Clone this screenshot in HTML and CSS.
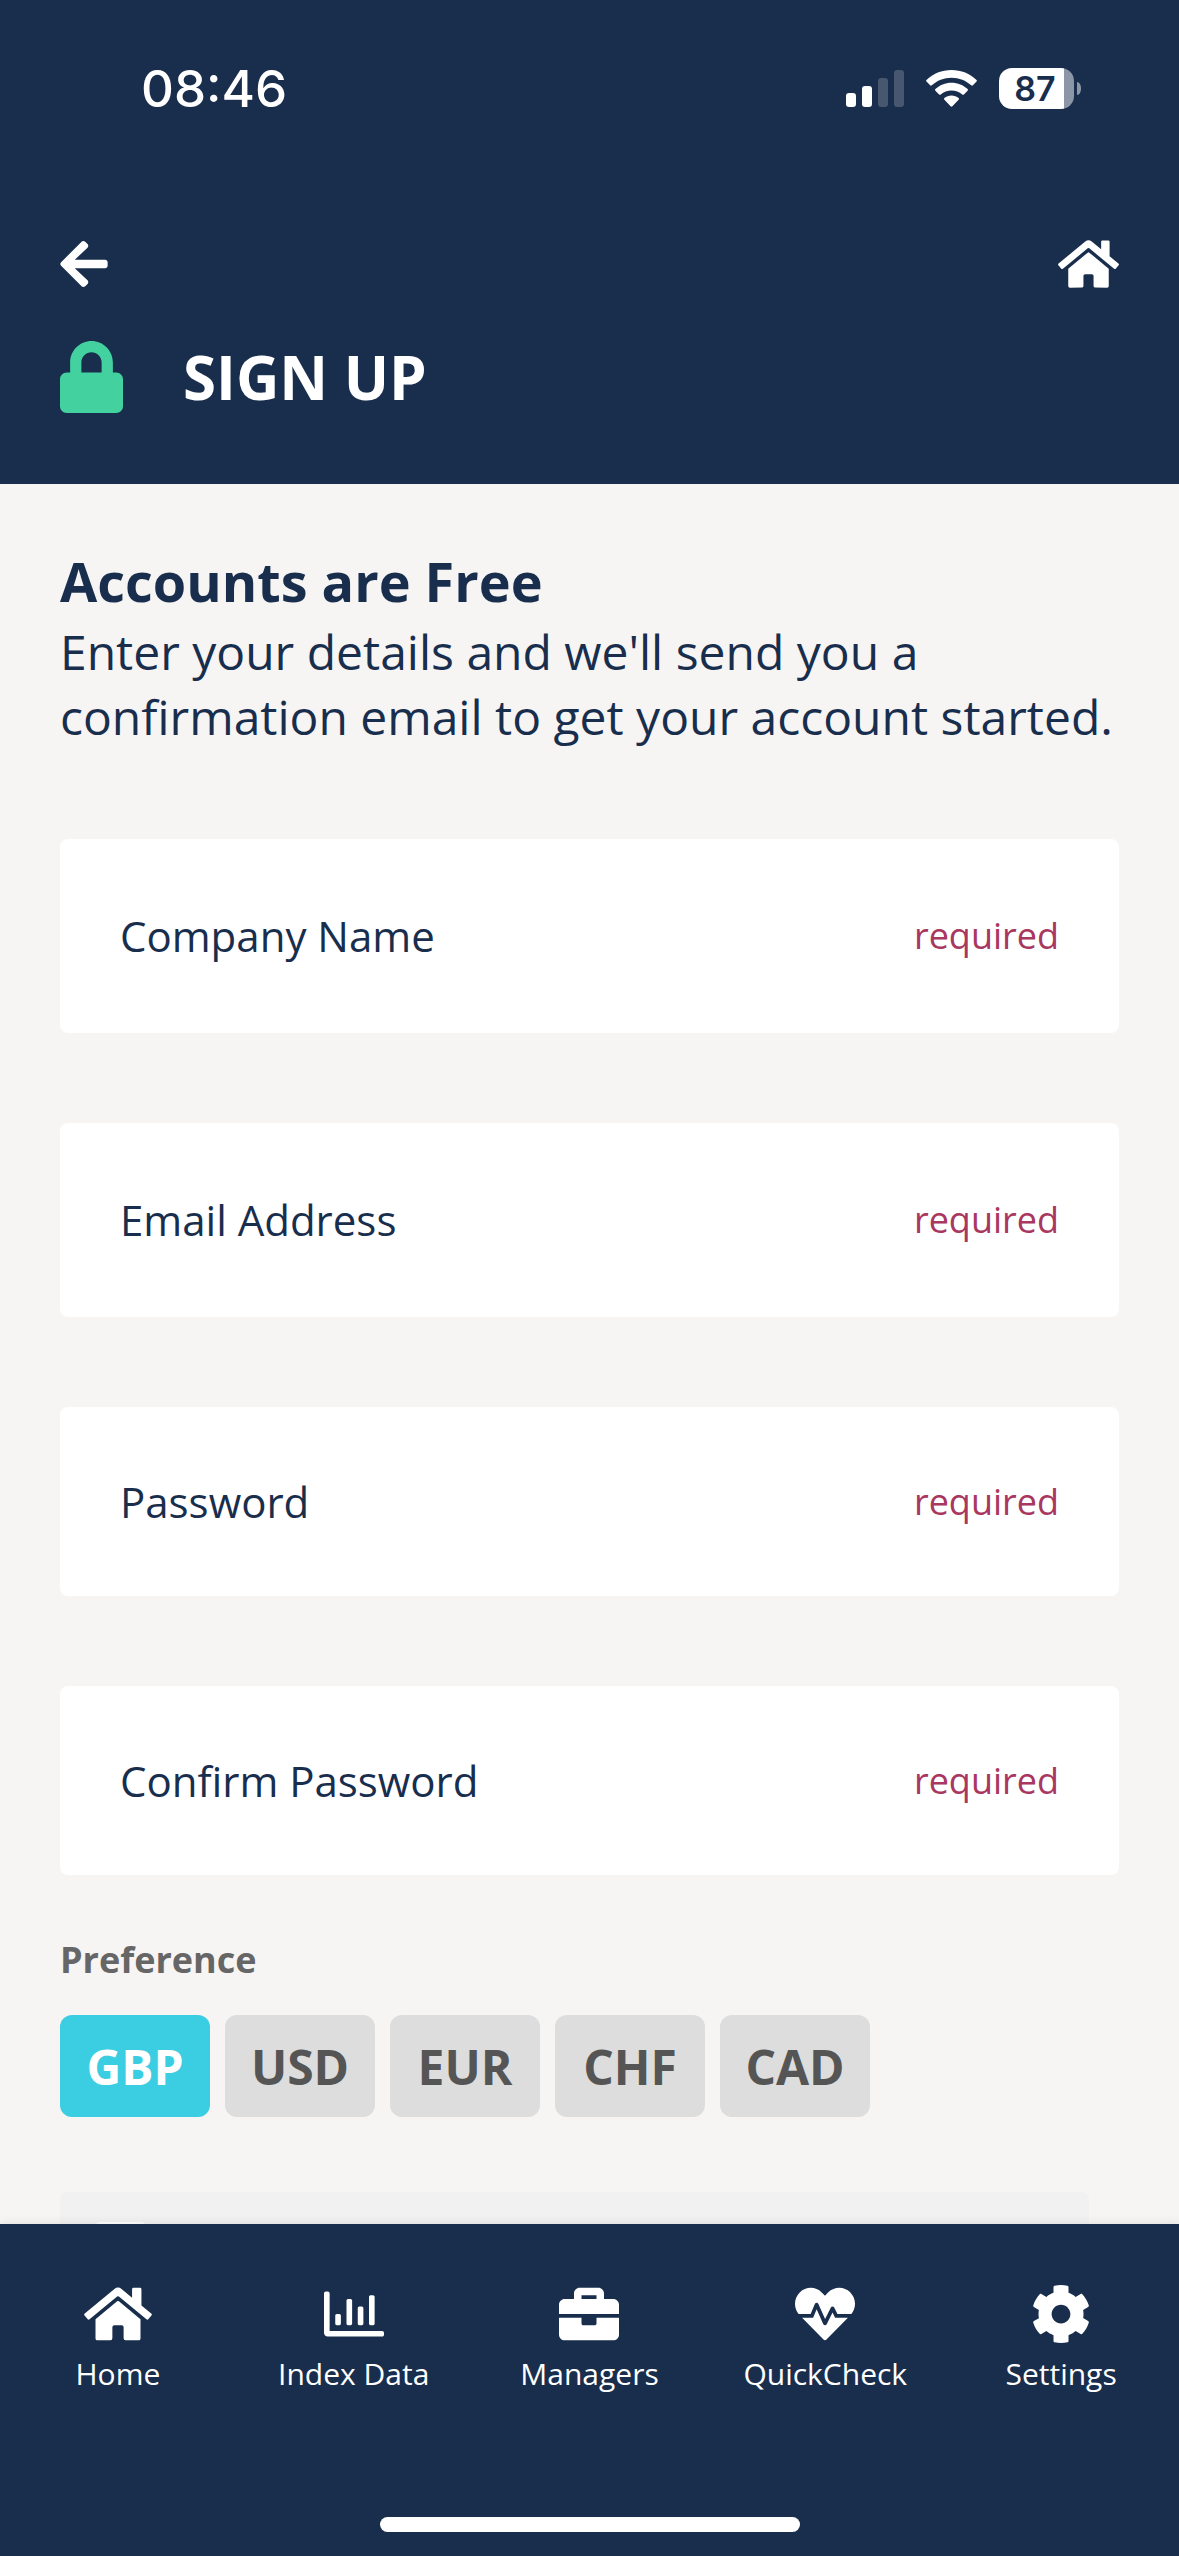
FILE: index.html
```html
<!DOCTYPE html>
<html lang="en">
<head>
    <meta charset="UTF-8">
    <meta name="viewport" content="width=device-width, initial-scale=1.0">
    <title>Sign Up</title>
    <link rel="stylesheet" href="styles.css">
</head>
<body>
    <!-- Shared icons -->
    <svg class="sprite" aria-hidden="true">
        <symbol id="icon-home" viewBox="0 0 576 512">
            <path d="M280.37 148.26L96 300.11V464a16 16 0 0 0 16 16l112.06-.29a16 16 0 0 0 15.92-16V368a16 16 0 0 1 16-16h64a16 16 0 0 1 16 16v95.64a16 16 0 0 0 16 16.05L464 480a16 16 0 0 0 16-16V300L295.67 148.26a12.19 12.19 0 0 0-15.3 0zM571.6 251.47L488 182.56V44.05a12 12 0 0 0-12-12h-56a12 12 0 0 0-12 12v72.61L318.47 43a48 48 0 0 0-61 0L4.34 251.47a12 12 0 0 0-1.6 16.9l25.5 31A12 12 0 0 0 45.15 301l235.22-193.74a12.19 12.19 0 0 1 15.3 0L530.9 301a12 12 0 0 0 16.9-1.6l25.5-31a12 12 0 0 0-1.7-16.93z"/>
        </symbol>
    </svg>

    <header class="header">
        <!-- Status bar -->
        <div class="status-bar">
            <span class="time">08:46</span>
            <div class="status-icons">
                <svg class="signal" viewBox="0 0 58 37" aria-hidden="true">
                    <rect x="0" y="23" width="10" height="14" rx="3"/>
                    <rect x="16" y="16" width="10" height="21" rx="3"/>
                    <rect class="faded" x="32" y="8" width="10" height="29" rx="3"/>
                    <rect class="faded" x="48" y="0" width="10" height="37" rx="3"/>
                </svg>
                <svg class="wifi" viewBox="0 0 51 37" aria-hidden="true">
                    <path d="M25.5 0C35.2 0 44 3.7 50.5 9.9q.8.8 0 1.7l-3.6 3.7q-.8.8-1.7 0C40 10.5 33.1 7.7 25.5 7.7S11 10.5 5.8 15.3q-.9.8-1.7 0L.5 11.6q-.8-.9 0-1.7C7 3.7 15.8 0 25.5 0z"/>
                    <path d="M25.5 12.7c6.2 0 11.9 2.4 16.1 6.3q.9.8 0 1.7l-3.7 3.7q-.8.8-1.7 0c-2.8-2.5-6.6-4-10.7-4s-7.9 1.5-10.7 4q-.9.8-1.7 0l-3.7-3.7q-.9-.9 0-1.7c4.2-3.9 9.9-6.3 16.1-6.3z"/>
                    <path d="M25.5 25.4c2.7 0 5.2 1 7.1 2.6q.9.8 0 1.7l-6.2 6.5q-.9.9-1.8 0l-6.2-6.5q-.9-.9 0-1.7c1.9-1.6 4.4-2.6 7.1-2.6z"/>
                </svg>
                <div class="battery">
                    <span class="battery-level">87</span>
                </div>
            </div>
        </div>

        <!-- Toolbar -->
        <div class="toolbar">
            <button class="icon-button" type="button" aria-label="Back">
                <svg class="icon-back" viewBox="0 0 448 512" aria-hidden="true">
                    <path d="M257.5 445.1l-22.2 22.2c-9.4 9.4-24.6 9.4-33.9 0L7 273c-9.4-9.4-9.4-24.6 0-33.9L201.4 44.7c9.4-9.4 24.6-9.4 33.9 0l22.2 22.2c9.5 9.5 9.3 25-.4 34.3L136.6 216H424c13.3 0 24 10.7 24 24v32c0 13.3-10.7 24-24 24H136.6l120.5 114.8c9.8 9.3 10 24.8.4 34.3z"/>
                </svg>
            </button>
            <button class="icon-button" type="button" aria-label="Home">
                <svg class="icon-home" aria-hidden="true"><use href="#icon-home"/></svg>
            </button>
        </div>

        <div class="title-row">
            <svg class="icon-lock" viewBox="0 0 448 512" aria-hidden="true">
                <path d="M400 224h-24v-72C376 68.2 307.8 0 224 0S72 68.2 72 152v72H48c-26.5 0-48 21.5-48 48v192c0 26.5 21.5 48 48 48h352c26.5 0 48-21.5 48-48V272c0-26.5-21.5-48-48-48zm-104 0H152v-72c0-39.7 32.3-72 72-72s72 32.3 72 72v72z"/>
            </svg>
            <h1>SIGN UP</h1>
        </div>
    </header>

    <main class="content">
        <h2>Accounts are Free</h2>
        <p class="intro">Enter your details and we'll send you a confirmation email to get your account started.</p>

        <form>
            <div class="fields">
                <div class="field">
                    <label for="company">Company Name</label>
                    <input type="text" id="company" required>
                    <span class="required">required</span>
                </div>
                <div class="field">
                    <label for="email">Email Address</label>
                    <input type="email" id="email" required>
                    <span class="required">required</span>
                </div>
                <div class="field field-password">
                    <label for="password">Password</label>
                    <input type="password" id="password" required>
                    <span class="required">required</span>
                </div>
                <div class="field field-password">
                    <label for="confirm">Confirm Password</label>
                    <input type="password" id="confirm" required>
                    <span class="required">required</span>
                </div>
            </div>

            <h3 id="preference">Preference</h3>
            <div class="currencies" role="group" aria-labelledby="preference">
                <button class="currency active" type="button" aria-pressed="true">GBP</button>
                <button class="currency" type="button" aria-pressed="false">USD</button>
                <button class="currency" type="button" aria-pressed="false">EUR</button>
                <button class="currency" type="button" aria-pressed="false">CHF</button>
                <button class="currency" type="button" aria-pressed="false">CAD</button>
            </div>

            <div class="terms">
                <input type="checkbox" aria-label="Accept terms">
            </div>
        </form>
    </main>

    <!-- Bottom navigation -->
    <footer class="footer">
        <nav class="nav">
            <a href="#" class="nav-item">
                <svg class="icon-nav icon-nav-home" aria-hidden="true"><use href="#icon-home"/></svg>
                <span>Home</span>
            </a>
            <a href="#" class="nav-item">
                <svg class="icon-nav" viewBox="0 0 512 512" aria-hidden="true">
                    <path d="M396.8 352h22.4c6.4 0 12.8-6.4 12.8-12.8V108.8c0-6.4-6.4-12.8-12.8-12.8h-22.4c-6.4 0-12.8 6.4-12.8 12.8v230.4c0 6.4 6.4 12.8 12.8 12.8zm-192 0h22.4c6.4 0 12.8-6.4 12.8-12.8V140.8c0-6.4-6.4-12.8-12.8-12.8h-22.4c-6.4 0-12.8 6.4-12.8 12.8v198.4c0 6.4 6.4 12.8 12.8 12.8zm96 0h22.4c6.4 0 12.8-6.4 12.8-12.8V204.8c0-6.4-6.4-12.8-12.8-12.8h-22.4c-6.4 0-12.8 6.4-12.8 12.8v134.4c0 6.4 6.4 12.8 12.8 12.8zM496 400H48V80c0-8.84-7.16-16-16-16H16C7.16 64 0 71.16 0 80v336c0 17.67 14.33 32 32 32h464c8.84 0 16-7.16 16-16v-16c0-8.84-7.16-16-16-16zm-387.2-48h22.4c6.4 0 12.8-6.4 12.8-12.8v-70.4c0-6.4-6.4-12.8-12.8-12.8h-22.4c-6.4 0-12.8 6.4-12.8 12.8v70.4c0 6.4 6.4 12.8 12.8 12.8z"/>
                </svg>
                <span>Index Data</span>
            </a>
            <a href="#" class="nav-item">
                <svg class="icon-nav" viewBox="0 0 512 512" aria-hidden="true">
                    <path d="M320 336c0 8.84-7.16 16-16 16h-96c-8.84 0-16-7.16-16-16v-48H0v144c0 25.6 22.4 48 48 48h416c25.6 0 48-22.4 48-48V288H320v48zm144-208h-80V80c0-25.6-22.4-48-48-48H176c-25.6 0-48 22.4-48 48v48H48c-25.6 0-48 22.4-48 48v80h512v-80c0-25.6-22.4-48-48-48zm-144 0H192V96h128v32z"/>
                </svg>
                <span>Managers</span>
            </a>
            <a href="#" class="nav-item">
                <svg class="icon-nav" viewBox="0 0 512 512" aria-hidden="true">
                    <path d="M320.2 243.8l-49.7 99.4c-6 12.1-23.4 11.7-28.9-.6l-56.9-126.3-30 71.7H60.6l182.5 186.5c7.1 7.3 18.6 7.3 25.7 0L451.4 288H342.3l-22.1-44.2zM473.7 73.9l-2.4-2.5c-51.5-52.6-135.8-52.6-187.4 0L256 100l-27.9-28.5c-51.5-52.7-135.9-52.7-187.4 0l-2.4 2.4C-10.4 123.7-12.5 203 31 256h102.4l35.9-86.2c5.4-12.9 23.6-13.2 29.4-.4l58.2 129.3 49-97.9c5.9-11.8 22.7-11.8 28.6 0l27.6 55.2H481c43.5-53 41.4-132.3-7.3-182.1z"/>
                </svg>
                <span>QuickCheck</span>
            </a>
            <a href="#" class="nav-item">
                <svg class="icon-nav" viewBox="0 0 512 512" aria-hidden="true">
                    <path d="M487.4 315.7l-42.6-24.6c4.3-23.2 4.3-47 0-70.2l42.6-24.6c4.9-2.8 7.1-8.6 5.5-14-11.1-35.6-30-67.8-54.7-94.6-3.8-4.1-10-5.1-14.8-2.3L380.8 110c-17.9-15.4-38.5-27.3-60.8-35.1V25.8c0-5.6-3.9-10.5-9.4-11.7-36.7-8.2-74.3-7.8-109.2 0-5.5 1.2-9.4 6.1-9.4 11.7V75c-22.2 7.9-42.8 19.8-60.8 35.1L88.7 85.5c-4.9-2.8-11-1.9-14.8 2.3-24.7 26.7-43.6 58.9-54.7 94.6-1.7 5.4.6 11.2 5.5 14L67.3 221c-4.3 23.2-4.3 47 0 70.2l-42.6 24.6c-4.9 2.8-7.1 8.6-5.5 14 11.1 35.6 30 67.8 54.7 94.6 3.8 4.1 10 5.1 14.8 2.3l42.6-24.6c17.9 15.4 38.5 27.3 60.8 35.1v49.2c0 5.6 3.9 10.5 9.4 11.7 36.7 8.2 74.3 7.8 109.2 0 5.5-1.2 9.4-6.1 9.4-11.7v-49.2c22.2-7.9 42.8-19.8 60.8-35.1l42.6 24.6c4.9 2.8 11 1.9 14.8-2.3 24.7-26.7 43.6-58.9 54.7-94.6 1.5-5.5-.7-11.3-5.6-14.1zM256 336c-44.1 0-80-35.9-80-80s35.9-80 80-80 80 35.9 80 80-35.9 80-80 80z"/>
                </svg>
                <span>Settings</span>
            </a>
        </nav>
        <div class="home-indicator"></div>
    </footer>
</body>
</html>
```

FILE: styles.css
```css
* {
    box-sizing: border-box;
}

/* Body Styling */
body {
    margin: 0;
    height: 100vh;
    display: flex;
    flex-direction: column;
    overflow: hidden;
    font-family: 'Open Sans', sans-serif;
    color: #192e4d;
    background: #f6f5f4;
}

h1, h2, h3, p {
    margin: 0;
}

button {
    font-family: inherit;
    border: none;
    padding: 0;
    cursor: pointer;
}

svg {
    display: block;
    fill: currentColor;
}

.sprite {
    display: none;
}

/* Header */
.header {
    flex-shrink: 0;
    padding: 0 60px 71px;
    color: white;
    background: #192e4d;
}

.status-bar {
    display: flex;
    justify-content: space-between;
    align-items: center;
    height: 176px;
    padding: 0 38px 0 81px;
    font-family: 'Inter', sans-serif;
}

.time {
    font-size: 51px;
    font-weight: 500;
}

.status-icons {
    display: flex;
    align-items: center;
    gap: 22px;
}

.signal {
    width: 58px;
    height: 37px;
}

.faded {
    opacity: 0.2;
}

.wifi {
    width: 51px;
    height: 37px;
}

.battery {
    display: flex;
    align-items: center;
    gap: 3px;
}

.battery-level {
    width: 75px;
    height: 41px;
    padding-right: 3px;
    border-radius: 13px;
    background: linear-gradient(to right, white 87%, #8c96a6 87%);
    color: #192e4d;
    font-size: 34px;
    font-weight: 600;
    line-height: 41px;
    text-align: center;
}

.battery::after {
    content: "";
    width: 4px;
    height: 13px;
    border-radius: 0 4px 4px 0 / 0 6px 6px 0;
    background: #8c96a6;
}

.toolbar {
    display: flex;
    justify-content: space-between;
    padding-top: 61px;
}

.icon-button {
    color: white;
    background: none;
}

.icon-back {
    width: 48px;
    height: 54px;
}

.icon-home {
    width: 61px;
    height: 54px;
}

.title-row {
    display: flex;
    align-items: center;
    gap: 60px;
    height: 72px;
    margin-top: 50px;
}

.icon-lock {
    width: 63px;
    height: 72px;
    color: #43d1a0;
}

h1 {
    font-size: 60px;
    font-weight: 700;
}

/* Sign up form */
.content {
    flex: 1;
    min-height: 0;
    overflow: hidden;
    padding: 60px 60px 0;
}

h2 {
    font-size: 54px;
    line-height: 75px;
}

.intro {
    margin-bottom: 90px;
    font-size: 48px;
    line-height: 65px;
}

.fields {
    display: flex;
    flex-direction: column;
    gap: 90px;
}

.field {
    display: flex;
    align-items: center;
    height: 194px;
    padding: 0 60px 2px;
    border-radius: 8px;
    background: white;
    font-size: 42px;
}

.field-password {
    height: 189px;
    padding-bottom: 0;
}

.field input {
    flex: 1;
    min-width: 0;
    padding: 0 30px;
    border: none;
    outline: none;
    background: none;
    font: inherit;
    color: inherit;
}

.required {
    color: #a9375f;
    font-size: 36px;
}

h3 {
    margin: 60px 0 30px;
    color: #666;
    font-size: 36px;
    line-height: 50px;
}

.currencies {
    display: flex;
    gap: 15px;
}

.currency {
    width: 150px;
    height: 102px;
    border-radius: 12px;
    background: #ddd;
    color: #555;
    font-size: 48px;
    font-weight: 700;
}

.currency.active {
    background: #3bcde2;
    color: white;
}

.terms {
    margin: 75px 30px 0 0;
    padding: 30px 33px;
    border-radius: 8px;
    background: #f1f1f1;
}

.terms input {
    appearance: none;
    display: block;
    width: 55px;
    height: 55px;
    margin: 0;
    border-radius: 8px;
    background: white;
}

/* Bottom navigation */
.footer {
    position: relative;
    flex-shrink: 0;
    padding: 60px 0 24px;
    background: #192e4d;
    box-shadow: 0 0 9px rgba(0, 0, 0, 0.1);
}

.nav {
    display: grid;
    grid-template-columns: repeat(5, 1fr);
}

.nav-item {
    display: flex;
    flex-direction: column;
    align-items: center;
    gap: 8px;
    color: white;
    font-size: 30px;
    line-height: 44px;
    text-decoration: none;
}

.icon-nav {
    width: 60px;
    height: 60px;
}

.icon-nav-home {
    width: 68px;
}

.home-indicator {
    width: 420px;
    height: 15px;
    margin: 121px auto 0;
    border-radius: 8px;
    background: white;
}
```
